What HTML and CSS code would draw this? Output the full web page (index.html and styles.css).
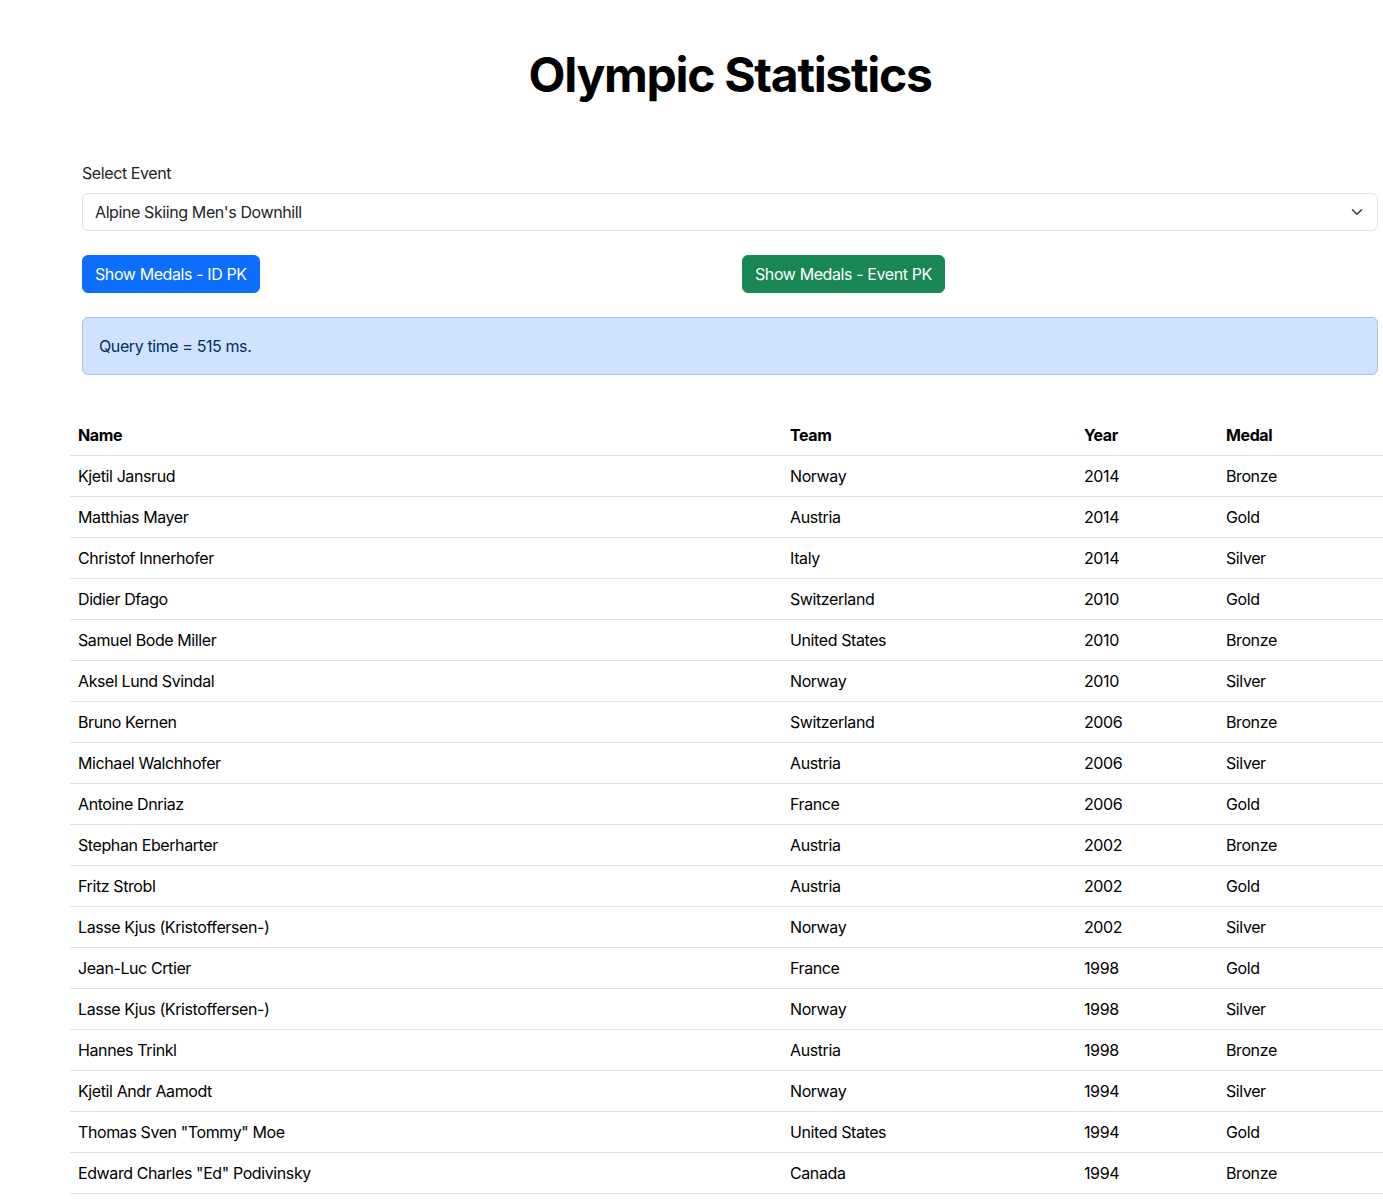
FILE: index.html
```html
<!DOCTYPE html>
<html lang="en">
<head>
<meta charset="utf-8">
<title>Olympic Statistics</title>
<link rel="stylesheet" href="styles.css">
</head>
<body>
<div class="page">
  <h1 class="title">Olympic Statistics</h1>
  <div class="form">
    <label class="form-label" for="ev">Select Event</label>
    <div class="select">
      <span>Alpine Skiing Men's Downhill</span>
      <svg class="chev" width="16" height="12" viewBox="0 0 16 16"><path d="m2 5 6 6 6-6" fill="none" stroke="#343a40" stroke-linecap="round" stroke-linejoin="round" stroke-width="2"/></svg>
    </div>
    <div class="btn-row">
      <div class="col"><button class="btn btn-primary">Show Medals - ID PK</button></div>
      <div class="col"><button class="btn btn-success">Show Medals - Event PK</button></div>
    </div>
    <div class="alert">Query time = 515 ms.</div>
  </div>
  <table class="table">
    <thead>
      <tr><th class="c-name">Name</th><th class="c-team">Team</th><th class="c-year">Year</th><th class="c-medal">Medal</th></tr>
    </thead>
    <tbody>
      <tr><td>Kjetil Jansrud</td><td>Norway</td><td>2014</td><td>Bronze</td></tr>
      <tr><td>Matthias Mayer</td><td>Austria</td><td>2014</td><td>Gold</td></tr>
      <tr><td>Christof Innerhofer</td><td>Italy</td><td>2014</td><td>Silver</td></tr>
      <tr><td>Didier Dfago</td><td>Switzerland</td><td>2010</td><td>Gold</td></tr>
      <tr><td>Samuel Bode Miller</td><td>United States</td><td>2010</td><td>Bronze</td></tr>
      <tr><td>Aksel Lund Svindal</td><td>Norway</td><td>2010</td><td>Silver</td></tr>
      <tr><td>Bruno Kernen</td><td>Switzerland</td><td>2006</td><td>Bronze</td></tr>
      <tr><td>Michael Walchhofer</td><td>Austria</td><td>2006</td><td>Silver</td></tr>
      <tr><td>Antoine Dnriaz</td><td>France</td><td>2006</td><td>Gold</td></tr>
      <tr><td>Stephan Eberharter</td><td>Austria</td><td>2002</td><td>Bronze</td></tr>
      <tr><td>Fritz Strobl</td><td>Austria</td><td>2002</td><td>Gold</td></tr>
      <tr><td>Lasse Kjus (Kristoffersen-)</td><td>Norway</td><td>2002</td><td>Silver</td></tr>
      <tr><td>Jean-Luc Crtier</td><td>France</td><td>1998</td><td>Gold</td></tr>
      <tr><td>Lasse Kjus (Kristoffersen-)</td><td>Norway</td><td>1998</td><td>Silver</td></tr>
      <tr><td>Hannes Trinkl</td><td>Austria</td><td>1998</td><td>Bronze</td></tr>
      <tr><td>Kjetil Andr Aamodt</td><td>Norway</td><td>1994</td><td>Silver</td></tr>
      <tr><td>Thomas Sven "Tommy" Moe</td><td>United States</td><td>1994</td><td>Gold</td></tr>
      <tr><td>Edward Charles "Ed" Podivinsky</td><td>Canada</td><td>1994</td><td>Bronze</td></tr>
    </tbody>
  </table>
</div>
</body>
</html>
```
FILE: styles.css
```css
html, body {
  margin: 0;
  padding: 0;
  overflow: hidden;
}
body {
  font-family: Inter, "Liberation Sans", sans-serif;
  font-size: 16px;
  line-height: 1.5;
  color: #212529;
  background: #fff;
  letter-spacing: -0.4px;
}
.page {
  width: 1320px;
  margin-left: 70px;
  padding-top: 46px;
}
.title {
  margin: 0;
  font-size: 48px;
  line-height: 1.2;
  font-weight: 700;
  color: #000;
  text-align: center;
  letter-spacing: -1.3px;
}
.form {
  padding: 0 12px;
  margin-top: 57px;
}
.form-label {
  display: block;
  margin-bottom: 8px;
}
.select {
  box-sizing: border-box;
  height: 38px;
  border: 1px solid #dee2e6;
  border-radius: 6px;
  padding: 6px 12px;
  display: flex;
  align-items: center;
  justify-content: space-between;
  width: 1296px;
}
.btn-row {
  display: flex;
  margin: 24px -12px 0;
}
.col {
  flex: 1 1 0;
  padding: 0 12px;
}
.btn {
  font-family: inherit;
  font-size: 16px;
  line-height: 24px;
  letter-spacing: -0.4px;
  padding: 6px 12px;
  border: 1px solid transparent;
  border-radius: 6px;
  color: #fff;
  height: 38px;
  box-sizing: border-box;
}
.btn-primary {
  background: #0d6efd;
  border-color: #0d6efd;
}
.btn-success {
  background: #198754;
  border-color: #198754;
}
.alert {
  margin-top: 24px;
  box-sizing: border-box;
  height: 58px;
  padding: 16px;
  background: #cfe2ff;
  border: 1px solid #9ec5fe;
  border-radius: 6px;
  color: #052c65;
  width: 1296px;
}
.table {
  margin-top: 40px;
  width: 1320px;
  border-collapse: collapse;
  color: #000;
}
.table th, .table td {
  text-align: left;
  padding: 8px;
  border-bottom: 1px solid #dee2e6;
  line-height: 24px;
}
.table th {
  font-weight: 700;
}
.c-name { width: 696px; }
.c-team { width: 278px; }
.c-year { width: 126px; }
```
